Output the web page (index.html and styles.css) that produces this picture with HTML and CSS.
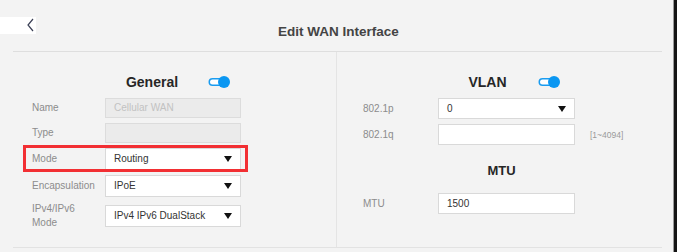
FILE: index.html
```html
<!DOCTYPE html>
<html lang="en">
<head>
    <meta charset="UTF-8">
    <title>Edit WAN Interface</title>
    <link rel="stylesheet" href="styles.css">
</head>
<body>
    <div class="topbar">
        <div class="back">
            <svg width="36" height="17" viewBox="0 0 36 17"><polyline points="33,1 28,7 33,13" fill="none" stroke="#3a3f55" stroke-width="1.2"/></svg>
        </div>
        <h1>Edit WAN Interface</h1>
        <div></div>
    </div>

    <div class="panel">
        <!-- General -->
        <div class="col col-left">
            <div class="section-title general">
                <span>General</span>
                <span class="toggle"><svg width="24" height="14" viewBox="0 0 24 14"><rect x="1.5" y="3" width="17" height="8" rx="4" fill="#1a9cf0"/><rect x="3" y="4.5" width="12" height="5" rx="2.5" fill="#fff"/><circle cx="17" cy="7" r="6" fill="#0b97f2"/></svg></span>
            </div>
            <div class="rows">
                <div class="row">
                    <label>Name</label>
                    <div class="field disabled">Cellular WAN</div>
                </div>
                <div class="row">
                    <label>Type</label>
                    <div class="field disabled"></div>
                </div>
                <div class="row row-select">
                    <label>Mode</label>
                    <div class="select"><span>Routing</span><i class="arrow"></i></div>
                    <div class="highlight"></div>
                </div>
                <div class="row row-select">
                    <label>Encapsulation</label>
                    <div class="select"><span>IPoE</span><i class="arrow"></i></div>
                </div>
                <div class="row row-select">
                    <label>IPv4/IPv6<br>Mode</label>
                    <div class="select"><span>IPv4 IPv6 DualStack</span><i class="arrow"></i></div>
                </div>
            </div>
        </div>

        <!-- VLAN / MTU -->
        <div class="col col-right">
            <div class="section-title vlan">
                <span>VLAN</span>
                <span class="toggle"><svg width="24" height="14" viewBox="0 0 24 14"><rect x="1.5" y="3" width="17" height="8" rx="4" fill="#1a9cf0"/><rect x="3" y="4.5" width="12" height="5" rx="2.5" fill="#fff"/><circle cx="17" cy="7" r="6" fill="#0b97f2"/></svg></span>
            </div>
            <div class="rows">
                <div class="row row-r">
                    <label>802.1p</label>
                    <div class="select"><span>0</span><i class="arrow"></i></div>
                </div>
                <div class="row row-r">
                    <label>802.1q</label>
                    <div class="field"></div>
                    <span class="hint">[1~4094]</span>
                </div>
            </div>
            <div class="section-title mtu">
                <span>MTU</span>
            </div>
            <div class="rows">
                <div class="row row-r">
                    <label>MTU</label>
                    <div class="field">1500</div>
                </div>
            </div>
        </div>
    </div>
</body>
</html>
```

FILE: styles.css
```css
body {
    font-family: 'Liberation Sans', Arial, sans-serif;
    margin: 0;
    background-color: #f3f3f3;
    color: #333;
    height: 252px;
    box-shadow: inset -3px 0 0 #141414, inset -4px 0 0 #9a9a9a;
    overflow: hidden;
}
.topbar {
    display: grid;
    grid-template-columns: 1fr auto 1fr;
    height: 51px;
}
.back {
    margin-top: 17px;
    width: 36px;
    height: 17px;
    background: white;
}
.back svg {
    display: block;
    margin-top: 1px;
}
h1 {
    margin: 0;
    padding-top: 24px;
    font-size: 13.5px;
    line-height: 16px;
    color: #444;
    font-weight: bold;
}
.panel {
    margin: 0 15px 0 13px;
    border-top: 1px solid #dedede;
    border-bottom: 1px solid #e2e2e2;
    display: grid;
    grid-template-columns: 323px 1fr;
    height: 195px;
}
.col-right {
    border-left: 1px solid #e4e4e4;
}
.section-title {
    display: flex;
    align-items: center;
    justify-content: center;
    gap: 29px;
    font-size: 14px;
    font-weight: bold;
    line-height: 16px;
    color: #262626;
    margin-top: 22px;
}
.toggle svg {
    display: block;
}
.general {
    padding-left: 8px;
}
.vlan {
    padding-left: 30px;
    gap: 30px;
}
.mtu {
    font-size: 13px;
    margin-top: 18px;
    padding-left: 4px;
}
.rows {
    display: flex;
    flex-direction: column;
    gap: 5px;
    margin-top: 8px;
    padding-left: 19px;
}
.col-right .rows {
    padding-left: 26px;
}
.row {
    position: relative;
    display: flex;
    align-items: center;
    font-size: 10px;
}
.row label {
    width: 73px;
    color: #8c8c8c;
    line-height: 14px;
}
.row-r label {
    width: 75px;
}
.field, .select {
    box-sizing: border-box;
    width: 136px;
    height: 20px;
    border: 1px solid #d9d9d9;
    background: white;
    padding: 0 8px;
    line-height: 18px;
    color: #333;
}
.row-r .field, .row-r .select {
    width: 137px;
    height: 21px;
    line-height: 19px;
}
.field.disabled {
    background: #ebebeb;
    border-color: #dcdcdc;
    color: #c2c2c2;
}
.select {
    height: 22px;
    line-height: 20px;
    display: flex;
    justify-content: space-between;
    align-items: center;
}
.arrow {
    width: 0;
    height: 0;
    border-left: 4px solid transparent;
    border-right: 4px solid transparent;
    border-top: 6px solid #111;
}
.hint {
    margin-left: 15px;
    font-size: 8.5px;
    color: #9a9a9a;
}
.col-right .mtu + .rows {
    margin-top: 14px;
}
.highlight {
    position: absolute;
    top: -3px;
    bottom: -2px;
    left: -9px;
    width: 219px;
    border: 3px solid #f22f33;
}
```
